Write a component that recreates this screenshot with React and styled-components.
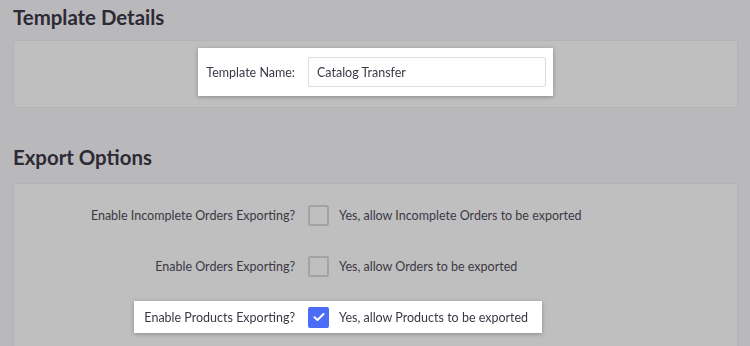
import React from "react";
import styled, { createGlobalStyle } from "styled-components";

const GlobalStyle = createGlobalStyle`
  html, body {
    margin: 0;
    padding: 0;
    background: #b9b9bb;
  }
  body {
    font-family: Lato, "Open Sans", sans-serif;
    color: #3b3845;
  }
`;

const Page = styled.div`
  width: 750px;
  height: 346px;
  overflow: hidden;
  background: #b9b9bb;
  padding: 0 12px 0 13px;
  box-sizing: border-box;
`;

const Heading = styled.h2`
  margin: 0;
  font-family: Lato, sans-serif;
  font-weight: 700;
  font-size: 20.4px;
  line-height: 24px;
  color: #2d2a36;
  padding-top: ${(p) => p.$top}px;
  height: 24px;
  margin-bottom: ${(p) => p.$gap}px;
`;

const Panel = styled.section`
  background: #bfbfbf;
  border: 1px solid #b3b3b5;
  border-radius: 2px;
  padding: ${(p) => p.$pad};
  display: flex;
  flex-direction: column;
  gap: 19px;
`;

const Row = styled.div`
  display: flex;
  align-items: center;
  filter: ${(p) => (p.$lit ? "drop-shadow(0 1px 2px rgba(0,0,0,0.28))" : "none")};
`;

const LabelCell = styled.div`
  flex: 0 0 294px;
  display: flex;
  justify-content: flex-end;
  align-self: stretch;
`;

const Label = styled.label`
  display: flex;
  align-items: center;
  font-size: 12.5px;
  color: #3b3845;
  white-space: nowrap;
  padding: 0 13px 0 ${(p) => (p.$lit ? p.$padLeft : 0)}px;
  background: ${(p) => (p.$lit ? "#ffffff" : "transparent")};
`;

const Control = styled.div`
  display: flex;
  align-items: center;
  align-self: stretch;
  gap: 10px;
  padding-right: ${(p) => (p.$lit ? p.$padRight : 0)}px;
  background: ${(p) => (p.$lit ? "#ffffff" : "transparent")};
  height: ${(p) => p.$h}px;
`;

const TextInput = styled.div`
  width: 238px;
  height: 30px;
  box-sizing: border-box;
  border: 1px solid #dddddd;
  border-radius: 2px;
  display: flex;
  align-items: center;
  padding-left: 8px;
  font-size: 12.5px;
  color: #3b3845;
  background: #fff;
`;

const Box = styled.span`
  width: 21px;
  height: 21px;
  box-sizing: border-box;
  border-radius: 2px;
  border: ${(p) => (p.$on ? "none" : "2px solid #a3a3a5")};
  background: ${(p) => (p.$on ? "#4b6cf6" : "transparent")};
  display: flex;
  align-items: center;
  justify-content: center;
  flex: none;
`;

const BoxText = styled.span`
  font-size: 12.5px;
  color: #3b3845;
  white-space: nowrap;
`;

function Check({ on }) {
  return (
    <Box $on={on}>
      {on && (
        <svg width="12" height="10" viewBox="0 0 12 10">
          <path d="M1.5 5.2 L4.5 8 L10.5 2" fill="none" stroke="#fff" strokeWidth="2" strokeLinecap="round" strokeLinejoin="round" />
        </svg>
      )}
    </Box>
  );
}

const options = [
  { label: "Enable Incomplete Orders Exporting?", text: "Yes, allow Incomplete Orders to be exported", on: false },
  { label: "Enable Orders Exporting?", text: "Yes, allow Orders to be exported", on: false },
  { label: "Enable Products Exporting?", text: "Yes, allow Products to be exported", on: true, lit: true },
];

export default function App() {
  return (
    <Page>
      <GlobalStyle />
      <Heading $top={5} $gap={11}>Template Details</Heading>
      <Panel $pad="7px 0 11px">
        <Row $lit>
          <LabelCell>
            <Label $lit $padLeft={8}>Template Name:</Label>
          </LabelCell>
          <Control $lit $padRight={7} $h={48}>
            <TextInput>Catalog Transfer</TextInput>
          </Control>
        </Row>
      </Panel>
      <Heading $top={37} $gap={14}>Export Options</Heading>
      <Panel $pad="15px 0 30px">
        {options.map((o) => (
          <Row key={o.label} $lit={o.lit}>
            <LabelCell>
              <Label $lit={o.lit} $padLeft={10}>{o.label}</Label>
            </LabelCell>
            <Control $lit={o.lit} $padRight={14} $h={32}>
              <Check on={o.on} />
              <BoxText>{o.text}</BoxText>
            </Control>
          </Row>
        ))}
      </Panel>
    </Page>
  );
}
